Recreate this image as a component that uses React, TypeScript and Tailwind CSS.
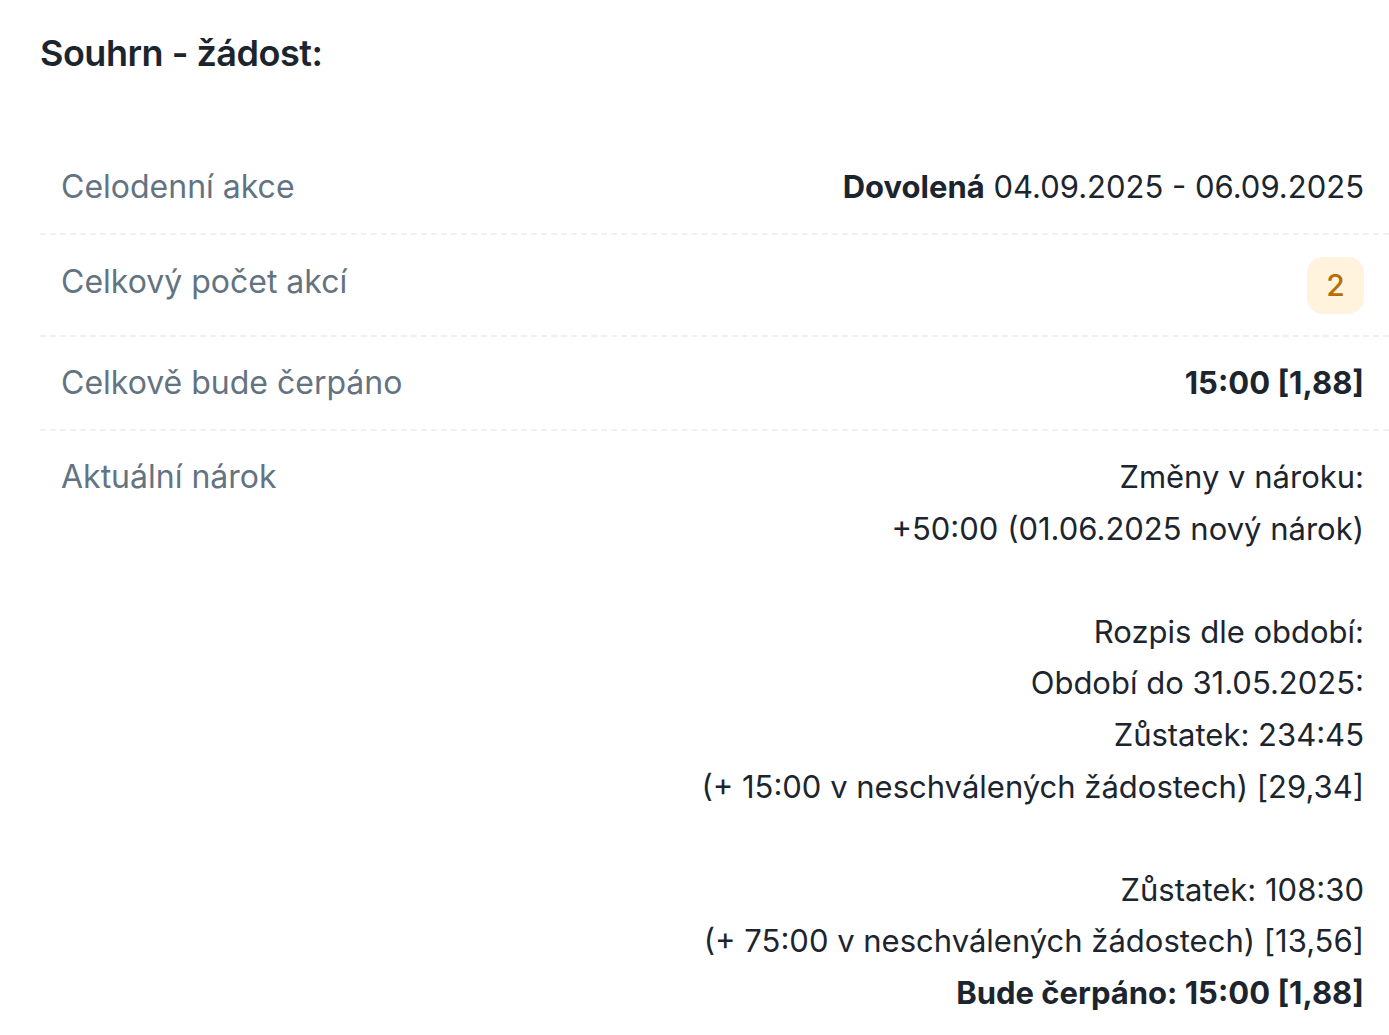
import React from "react";

export default function App() {
  return (
    <div className="bg-white min-h-[1035px] pl-[40px] pt-[28px] text-[#1C252E] font-['Inter',sans-serif]">
      <h1 className="text-[36px] leading-[50px] font-semibold tracking-[-0.5px]">Souhrn - žádost:</h1>
      <div className="mt-[63px]">
        <div className="flex items-center justify-between pl-[21px] pr-[25px] h-[94px] border-b-2 border-dashed border-[#eef0f2]">
          <span className="text-[32px] text-[#637381]">Celodenní akce</span>
          <span className="text-[31px]"><b className="font-bold">Dovolená</b> 04.09.2025 - 06.09.2025</span>
        </div>
        <div className="flex items-center justify-between pl-[21px] pr-[25px] h-[102px] border-b-2 border-dashed border-[#eef0f2]">
          <span className="text-[32px] text-[#637381] -mt-[6px]">Celkový počet akcí</span>
          <span className="flex items-center justify-center w-[57px] h-[57px] rounded-[16px] bg-[#FFF3DE] text-[#B76E00] text-[30px] font-medium">2</span>
        </div>
        <div className="flex items-center justify-between pl-[21px] pr-[25px] h-[94px] border-b-2 border-dashed border-[#eef0f2]">
          <span className="text-[32px] text-[#637381]">Celkově bude čerpáno</span>
          <span className="text-[31px] font-bold">15:00 [1,88]</span>
        </div>
        <div className="flex items-start justify-between pl-[21px] pr-[25px] pt-[20px]">
          <span className="text-[32px] leading-[52px] text-[#637381]">Aktuální nárok</span>
          <div className="text-right text-[31px] leading-[51.6px]">
            <div>Změny v nároku:</div>
            <div>+50:00 (01.06.2025 nový nárok)</div>
            <div>&nbsp;</div>
            <div>Rozpis dle období:</div>
            <div>Období do 31.05.2025:</div>
            <div>Zůstatek: 234:45</div>
            <div>(+ 15:00 v neschválených žádostech) [29,34]</div>
            <div>&nbsp;</div>
            <div>Zůstatek: 108:30</div>
            <div>(+ 75:00 v neschválených žádostech) [13,56]</div>
            <div className="font-bold">Bude čerpáno: 15:00 [1,88]</div>
          </div>
        </div>
      </div>
    </div>
  );
}
